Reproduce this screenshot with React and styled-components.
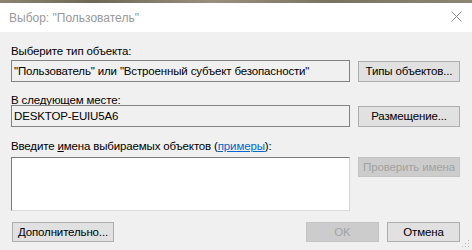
import styled, { createGlobalStyle } from "styled-components";

const GlobalStyle = createGlobalStyle`
    html, body {
        margin: 0;
        padding: 0;
        background: #f0f0f0;
    }
    body {
        font-family: "Liberation Sans", Arial, sans-serif;
    }
`

const Ventana = styled.div`
    position: relative;
    display: flex;
    flex-direction: column;
    width: 472px;
    height: 250px;
    overflow: hidden;
    background: #f0f0f0;
`

const Escritorio = styled.div`
    height: 3px;
    background: linear-gradient(90deg, #8c8470, #6f6856 20%, #9a9080 45%, #7a7260 70%, #8e8674);
`

const BarraTitulo = styled.div`
    display: flex;
    align-items: center;
    justify-content: space-between;
    height: 29px;
    padding: 0 10px 0 9px;
    background: #ffffff;

    span {
        font-size: 12px;
        color: #999999;
    }

    svg {
        margin-top: -3px;
    }
`

const Cuerpo = styled.div`
    display: flex;
    flex-direction: column;
    flex: 1;
    padding: 0 12px 0 11px;
    font-size: 11.5px;
    letter-spacing: -0.15px;
    color: #000;
`

const Etiqueta = styled.div`
    height: 14px;
    line-height: 14px;
    margin-top: ${p => p.$arriba}px;
    white-space: nowrap;

    u {
        text-decoration: underline;
    }

    a {
        color: #0066cc;
        text-decoration: underline;
    }
`

const Fila = styled.div`
    display: flex;
    align-items: ${p => p.$alinear || "center"};
    gap: 8px;
    margin-top: ${p => p.$arriba}px;
`

const Campo = styled.div`
    flex: 1;
    height: 22px;
    box-sizing: border-box;
    border: 1px solid #828282;
    background: #f0f0f0;
    padding-left: 2px;
    line-height: 20px;
    white-space: nowrap;
    overflow: hidden;
`

const AreaTexto = styled.div`
    flex: 1;
    height: 54px;
    box-sizing: border-box;
    background: #ffffff;
    border-style: solid;
    border-width: 1px;
    border-color: #7a7a7a #d6d6d6 #dcdcdc #7a7a7a;
`

const Boton = styled.button`
    width: ${p => p.$ancho || 102}px;
    height: ${p => p.$alto || 21}px;
    box-sizing: border-box;
    padding: 0;
    margin: 0;
    font-family: "Liberation Sans", Arial, sans-serif;
    font-size: 11.5px;
    letter-spacing: -0.15px;
    color: ${p => (p.disabled ? "#a2a2a2" : "#000")};
    background: ${p => (p.disabled ? "#cccccc" : "#e1e1e1")};
    border: 1px solid ${p => (p.disabled ? "#c4c4c4" : "#adadad")};
    white-space: nowrap;
`

const PieBotones = styled.div`
    display: flex;
    align-items: center;
    gap: 8px;
    margin-top: 11px;
    padding-left: 1px;

    & > :first-child {
        margin-right: auto;
    }
`

const Agarre = styled.svg`
    position: absolute;
    right: 2px;
    bottom: 2px;
`

const Cerrar = () => (
    <svg width="11" height="11" viewBox="0 0 11 11">
        <path d="M0.5 0.5 L10.5 10.5 M10.5 0.5 L0.5 10.5" stroke="#8a8a8a" strokeWidth="1" fill="none" />
    </svg>
)

export default function App() {
    return (
        <Ventana>
            <GlobalStyle />
            <Escritorio />
            <BarraTitulo>
                <span>Выбор: "Пользователь"</span>
                <Cerrar />
            </BarraTitulo>
            <Cuerpo>
                <Etiqueta $arriba={12}>Выберите тип объекта:</Etiqueta>
                <Fila $arriba={2}>
                    <Campo>"Пользователь" или "Встроенный субъект безопасности"</Campo>
                    <Boton>Типы объектов...</Boton>
                </Fila>
                <Etiqueta $arriba={11}>В следующем месте:</Etiqueta>
                <Fila $arriba={-2}>
                    <Campo>DESKTOP-EUIU5A6</Campo>
                    <Boton>Размещение...</Boton>
                </Fila>
                <Etiqueta $arriba={12}>
                    Введите <u>и</u>мена выбираемых объектов (<a>примеры</a>):
                </Etiqueta>
                <Fila $arriba={4} $alinear="flex-start">
                    <AreaTexto />
                    <Boton disabled $alto={20}>Проверить имена</Boton>
                </Fila>
                <PieBotones>
                    <Boton $alto={20}>Дополнительно...</Boton>
                    <Boton disabled $ancho={73} $alto={20}>OK</Boton>
                    <Boton $ancho={73} $alto={20}>Отмена</Boton>
                </PieBotones>
            </Cuerpo>
            <Agarre width="9" height="9" viewBox="0 0 9 9">
                <rect x="7" y="1" width="1" height="1" fill="#b8b8b8" />
                <rect x="4" y="4" width="1" height="1" fill="#b8b8b8" />
                <rect x="7" y="4" width="1" height="1" fill="#b8b8b8" />
                <rect x="1" y="7" width="1" height="1" fill="#b8b8b8" />
                <rect x="4" y="7" width="1" height="1" fill="#b8b8b8" />
                <rect x="7" y="7" width="1" height="1" fill="#b8b8b8" />
            </Agarre>
        </Ventana>
    );
}
